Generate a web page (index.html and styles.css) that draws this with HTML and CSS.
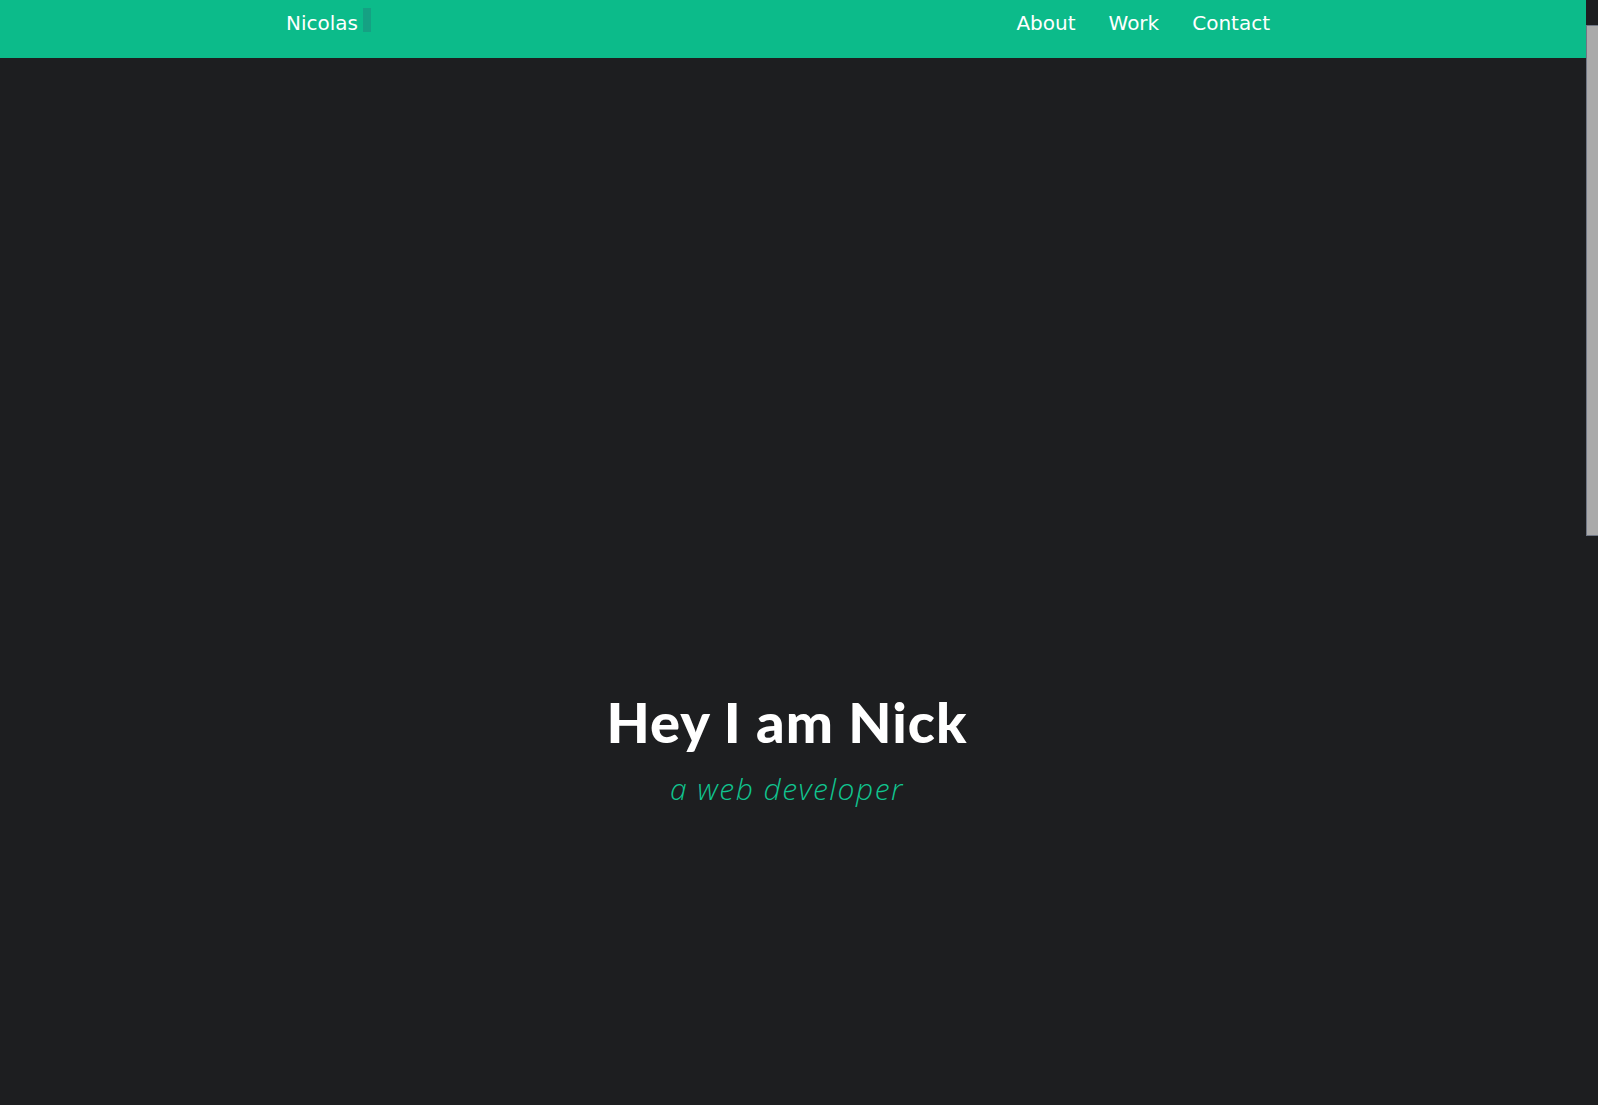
FILE: index.html
```html
<!DOCTYPE html>
<html lang="en">
<head>
<meta charset="utf-8">
<title>Nicolas</title>
<link rel="stylesheet" href="styles.css">
</head>
<body>
<header class="topbar">
  <div class="container bar-inner">
    <a class="logo" href="#">Nicolas<span class="caret"></span></a>
    <nav class="nav">
      <a href="#about">About</a>
      <a href="#work">Work</a>
      <a href="#contact">Contact</a>
    </nav>
  </div>
</header>
<main>
  <section class="hero">
    <h1 class="hero-title">Hey I am Nick</h1>
    <p class="hero-sub">a web developer</p>
  </section>
  <section class="more" id="about"></section>
</main>
<div class="scroll-rail"><div class="scroll-thumb"></div></div>
</body>
</html>
```
FILE: styles.css
```css
html { background: #1d1e20; }
html::-webkit-scrollbar { display: none; }
body {
  margin: 0 12px 0 0;
  background: #1d1e20;
  font-family: "DejaVu Sans", "Liberation Sans", sans-serif;
  color: #fff;
}

.scroll-rail {
  position: fixed;
  top: 0;
  right: 0;
  width: 12px;
  height: 100vh;
  background: #1d1e20;
}
.scroll-thumb {
  margin-top: 25px;
  height: 511px;
  box-sizing: border-box;
  background: #aaaaaa;
  border: 1px solid #6f7684;
  border-right: 0;
}

.topbar {
  background: #0cbb8a;
  height: 58px;
}
.container {
  width: 1014px;
  margin: 0 auto;
  box-sizing: border-box;
}
.bar-inner {
  display: flex;
  justify-content: space-between;
  align-items: flex-start;
  padding-top: 11px;
}
.logo {
  display: flex;
  align-items: flex-start;
  color: #fff;
  text-decoration: none;
  font-size: 20px;
  line-height: 24px;
}
.caret {
  display: block;
  width: 8px;
  height: 24px;
  margin: -3px 0 0 5px;
  background: rgba(26, 150, 128, 0.7);
}
.nav {
  display: flex;
  gap: 33px;
  padding-right: 30px;
}
.nav a {
  color: #fff;
  text-decoration: none;
  font-size: 20px;
  line-height: 24px;
}
.hero {
  height: 1047px;
  box-sizing: border-box;
  padding: 630px 12px 0 0;
  text-align: center;
}
.hero-title {
  margin: 0;
  font-family: Lato, "Liberation Sans", sans-serif;
  font-weight: 900;
  font-size: 56px;
  line-height: 67px;
  letter-spacing: 1px;
  color: #fff;
}
.hero-sub {
  margin: 16px 0 0;
  font-family: "Open Sans", "Liberation Sans", sans-serif;
  font-style: italic;
  font-weight: 300;
  font-size: 30px;
  line-height: 36px;
  letter-spacing: 1.5px;
  color: #10c48f;
}
.more {
  height: 1230px;
}
```
